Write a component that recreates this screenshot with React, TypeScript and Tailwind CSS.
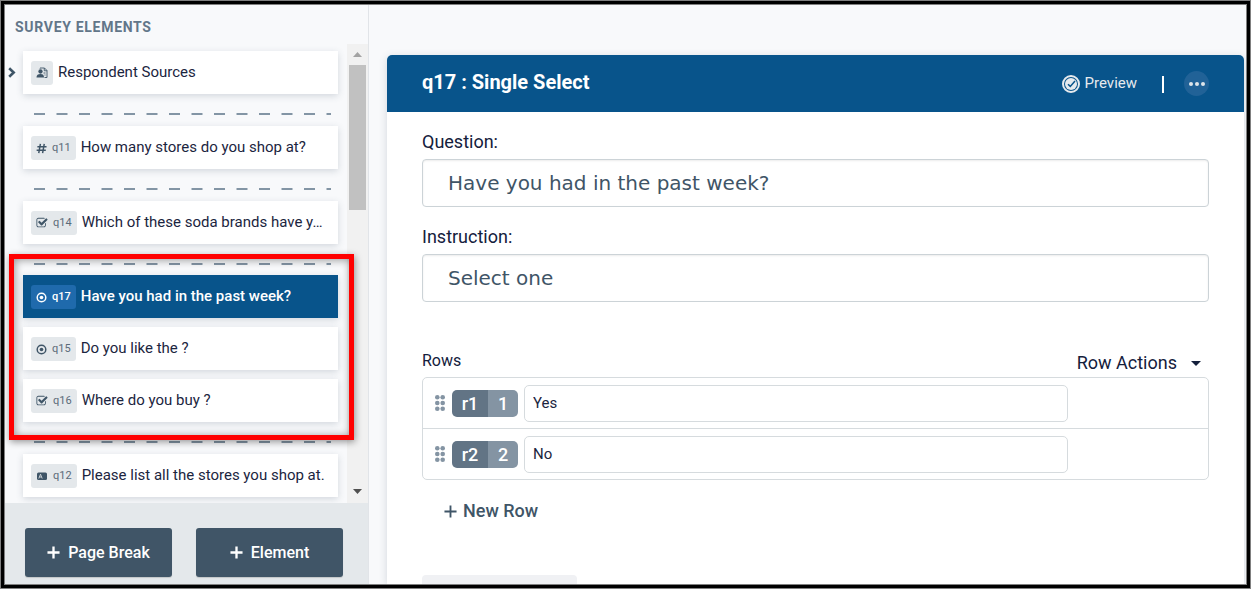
import type { ReactNode } from "react";

type Kind = "source" | "number" | "check" | "radio" | "text";

function KindIcon({ kind }: { kind: Kind }) {
  switch (kind) {
    case "source":
      return (
        <svg viewBox="0 0 24 24" className="size-3" fill="none" stroke="currentColor" strokeWidth="1.800" aria-hidden="true">
          <path d="M8 3V2h9l5 5v14h-5" />
          <path d="M16.500 2v5.500H22" />
          <circle cx="9" cy="9" r="4.300" fill="currentColor" stroke="none" />
          <path d="M1 21c0-5 3-7 8-7s7 2 7 7z" fill="currentColor" stroke="none" />
          <path d="M15 12h4M17 16h2" />
        </svg>
      );
    case "number":
      return (
        <svg viewBox="0 0 12 12" className="size-[11px]" fill="none" stroke="currentColor" strokeWidth="1.600" aria-hidden="true">
          <path d="M4.800 1 3 11M9 1 7.200 11M1.500 4.200h10M.700 7.900h10" />
        </svg>
      );
    case "check":
      return (
        <svg viewBox="0 0 1792 1792" className="size-3" fill="currentColor" aria-hidden="true">
          <path d="M1472 930v318q0 119-84.5 203.5t-203.5 84.500h-832q-119 0-203.500-84.500t-84.500-203.500v-832q0-119 84.500-203.500t203.500-84.500h832q63 0 117 25 15 7 18 23 3 17-9 29l-49 49q-10 10-23 10-3 0-9-2-23-6-45-6h-832q-66 0-113 47t-47 113v832q0 66 47 113t113 47h832q66 0 113-47t47-113v-254q0-13 9-22l64-64q10-10 23-10 6 0 12 3 20 8 20 29zm231-489l-814 814q-24 24-57 24t-57-24l-430-430q-24-24-24-57t24-57l110-110q24-24 57-24t57 24l263 263 647-647q24-24 57-24t57 24l110 110q24 24 24 57t-24 57z" />
        </svg>
      );
    case "radio":
      return (
        <svg viewBox="0 0 12 12" className="size-[11px]" aria-hidden="true">
          <circle cx="6" cy="6" r="4.700" fill="none" stroke="currentColor" strokeWidth="1.600" />
          <circle cx="6" cy="6" r="2" fill="currentColor" />
        </svg>
      );
    case "text":
      return (
        <svg viewBox="0 0 12 12" className="size-3" aria-hidden="true">
          <rect x="1" y="2.500" width="10" height="7.500" rx="1.500" fill="currentColor" />
          <path d="M2.800 8.500 4.500 4.200 6.200 8.500M3.500 7h2" stroke="#e4e8eb" strokeWidth=".8" fill="none" />
        </svg>
      );
  }
}

function ElementCard({ kind, id, title, active }: { kind: Kind; id?: string; title: string; active?: boolean }) {
  return (
    <button
      type="button"
      className={
        active
          ? "flex h-[43px] w-full items-center gap-[5px] bg-[#08548b] px-2 text-left font-medium text-white shadow-[0_2px_7px_rgba(60,80,100,0.2)]"
          : "flex h-[43px] w-full items-center gap-[5px] bg-white px-2 text-left text-[#1b2540] shadow-[0_2px_7px_rgba(60,80,100,0.2)]"
      }
    >
      <span
        className={
          active
            ? "mt-px flex h-6 shrink-0 items-center gap-[5px] rounded-[3px] bg-[#1f6aac] px-[5px] text-[11px] text-white"
            : "mt-px flex h-6 shrink-0 items-center gap-[5px] rounded-[3px] bg-[#e4e8eb] px-[5px] text-[11px] text-[#5b6b79]"
        }
      >
        <span className={active ? "text-white" : "text-[#3f5567]"}>
          <KindIcon kind={kind} />
        </span>
        {id}
      </span>
      <span className="mb-0.5 text-[15px] leading-5 whitespace-nowrap">{title}</span>
    </button>
  );
}

function PageBreakLine() {
  return (
    <svg viewBox="0 0 594 4" preserveAspectRatio="none" className="mt-[19px] mb-[11px] ml-[11px] block h-0.5 w-[297px]" aria-hidden="true">
      <path d="M0 2H594" stroke="#8395a5" strokeWidth="4" strokeDasharray="22 23" />
    </svg>
  );
}

function Plus({ className }: { className: string }) {
  return (
    <svg viewBox="0 0 14 14" className={className} fill="none" stroke="currentColor" aria-hidden="true">
      <path d="M7 .5v13M.5 7h13" />
    </svg>
  );
}

function SideButton({ children }: { children: ReactNode }) {
  return (
    <button
      type="button"
      className="flex h-[49px] flex-1 items-center justify-center gap-2 rounded-[3px] bg-[#405567] font-medium text-white shadow-[0_1px_1px_rgba(0,0,0,0.15)]"
    >
      <Plus className="size-[13px] stroke-[2.500]" />
      {children}
    </button>
  );
}

function Sidebar() {
  return (
    <aside className="flex w-[364px] shrink-0 flex-col border-r border-[#e1e4e8] bg-[#f8f9fb]">
      <h2 className="flex h-[39px] shrink-0 items-center pt-1.5 pl-2.5 text-[14px] font-bold tracking-wider text-[#627689]">
        SURVEY ELEMENTS
      </h2>
      <div className="flex min-h-0 flex-1">
        <div className="flex w-[18px] shrink-0 pt-[23px] pl-[3px] text-[#3f5567]">
          <svg viewBox="0 0 8 11" className="h-[11px] w-2" fill="none" stroke="currentColor" strokeWidth="2.600" aria-hidden="true">
            <path d="M1.200 1.200 5.700 5.500 1.200 9.800" />
          </svg>
        </div>
        <nav aria-label="Survey elements" className="min-w-0 flex-1 pt-[7px]">
          <ElementCard kind="source" title="Respondent Sources" />
          <PageBreakLine />
          <ElementCard kind="number" id="q11" title="How many stores do you shop at?" />
          <PageBreakLine />
          <ElementCard kind="check" id="q14" title="Which of these soda brands have y…" />
          <PageBreakLine />
          <div className="relative -mt-px flex flex-col gap-[9px]">
            <ElementCard kind="radio" id="q17" title="Have you had in the past week?" active />
            <ElementCard kind="radio" id="q15" title="Do you like the ?" />
            <ElementCard kind="check" id="q16" title="Where do you buy ?" />
            <div className="pointer-events-none absolute -top-[21px] -right-4 -bottom-[18px] -left-3.5 z-10 border-5 border-[#ff0000] shadow-[1px_2px_7px_rgba(0,0,0,0.4),inset_1px_1px_9px_rgba(0,0,0,0.4)]" />
          </div>
          <PageBreakLine />
          <ElementCard kind="text" id="q12" title="Please list all the stores you shop at." />
        </nav>
        <div className="ml-[9px] flex w-[21px] shrink-0 flex-col items-center justify-between bg-[#f1f1f1]">
          <div className="flex flex-col items-center">
            <svg viewBox="0 0 9 5" className="my-2 h-[5px] w-[9px]" aria-hidden="true">
              <path d="M4.500 0 9 5H0z" fill="#a3a3a3" />
            </svg>
            <div className="h-[145px] w-[17px] bg-[#c1c1c1]" />
          </div>
          <svg viewBox="0 0 9 5" className="mb-[9px] h-[5px] w-[9px]" aria-hidden="true">
            <path d="M0 0h9L4.500 5z" fill="#505050" />
          </svg>
        </div>
      </div>
      <div className="flex h-[81px] shrink-0 gap-6 bg-[#e4e8eb] pt-[25px] pr-[25px] pl-5">
        <SideButton>Page Break</SideButton>
        <SideButton>Element</SideButton>
      </div>
    </aside>
  );
}

function Field({ id, label, value }: { id: string; label: string; value: string }) {
  return (
    <div className="flex flex-col gap-1.5">
      <label htmlFor={id} className="text-[18px] leading-[22px] text-[#14203c]">
        {label}
      </label>
      <input
        id={id}
        defaultValue={value}
        className="h-12 w-full rounded-[4px] border border-[#ccd3d7] bg-white px-[25px] font-['DejaVu_Sans',sans-serif] text-[20px] text-[#3f5567] shadow-[inset_0_1px_2px_rgba(0,0,0,0.08)]"
      />
    </div>
  );
}

function AnswerRow({ code, value, text }: { code: string; value: string; text: string }) {
  return (
    <li className="box-content flex h-[50px] items-center">
      <svg viewBox="0 0 10 16" className="ml-3 h-4 w-2.5 fill-[#8494a3]" aria-hidden="true">
        {[2.3, 8, 13.7].map((y) => (
          <g key={y}>
            <circle cx="2.300" cy={y} r="2.300" />
            <circle cx="7.700" cy={y} r="2.300" />
          </g>
        ))}
      </svg>
      <div className="ml-[7px] flex h-[27px] w-[66px] overflow-hidden rounded-[5px] text-[18px] leading-[27px] font-medium text-white">
        <span className="w-9 bg-[#627485] text-center">{code}</span>
        <span className="flex-1 bg-[#8494a3] text-center">{value}</span>
      </div>
      <input
        aria-label={`Row ${code}`}
        defaultValue={text}
        className="mr-[140px] ml-1.5 h-[37px] min-w-0 flex-1 rounded-[5px] border border-[#d6dbde] bg-white px-2 text-[15px] text-[#1b2540]"
      />
    </li>
  );
}

function Editor() {
  return (
    <main className="flex min-w-0 flex-1 flex-col bg-[#f8f9fb] pt-[50px] pr-0.5 pl-[18px]">
      <section className="flex flex-1 flex-col rounded-t-[5px] bg-white shadow-[0_2px_8px_rgba(60,80,100,0.2)]">
        <header className="flex h-[57px] shrink-0 items-center rounded-t-[5px] bg-[#08548b] px-[35px] text-white">
          <h1 className="mb-1 flex-1 text-[20px] leading-6 font-bold">q17 : Single Select</h1>
          <button type="button" className="flex items-center gap-[5px] text-[15px] text-[#e6eaee]">
            <svg viewBox="0 0 18 18" className="size-[18px]" fill="none" stroke="currentColor" aria-hidden="true">
              <circle cx="9" cy="9" r="8" strokeWidth="2" />
              <circle cx="9" cy="9" r="6" fill="currentColor" stroke="none" />
              <path d="M6 9.200 8.300 11.400 13 6" stroke="#08548b" strokeWidth="1.500" />
            </svg>
            Preview
          </button>
          <span className="mt-0.5 mr-5 ml-[25px] h-[17px] w-0.5 bg-white" />
          <button type="button" aria-label="More options" className="flex size-[25px] items-center justify-center rounded-full bg-[#216297]">
            <svg viewBox="0 0 16 4" className="h-1 w-4 fill-[#dfe5ea]" aria-hidden="true">
              <circle cx="2" cy="2" r="2" />
              <circle cx="8" cy="2" r="2" />
              <circle cx="14" cy="2" r="2" />
            </svg>
          </button>
        </header>
        <div className="px-[35px] pt-[19px]">
          <div className="flex flex-col gap-[19px]">
            <Field id="question" label="Question:" value="Have you had in the past week?" />
            <Field id="instruction" label="Instruction:" value="Select one" />
          </div>
          <div className="mt-[49px] flex items-center justify-between">
            <h2 className="mb-1 text-[16px] leading-5 text-[#14203c]">Rows</h2>
            <button type="button" className="mr-2 flex items-center gap-3.5 text-[18px] leading-6 text-[#14203c]">
              Row Actions
              <svg viewBox="0 0 10 5" className="h-[5px] w-2.5" aria-hidden="true">
                <path d="M0 0h10L5 5z" fill="currentColor" />
              </svg>
            </button>
          </div>
          <ul className="mt-0.5 divide-y divide-[#d6dbde] rounded-[5px] border border-[#d6dbde]">
            <AnswerRow code="r1" value="1" text="Yes" />
            <AnswerRow code="r2" value="2" text="No" />
          </ul>
          <button type="button" className="mt-[19px] ml-[22px] flex items-center gap-1.5 text-[18px] leading-6 font-medium text-[#3f5567]">
            <Plus className="size-[13px] stroke-[2]" />
            New Row
          </button>
        </div>
        <div className="mt-auto ml-[35px] h-[9px] w-[155px] rounded-t-[4px] bg-[#f0f1f4]" />
      </section>
    </main>
  );
}

export default function App() {
  return (
    <div className="h-screen border border-[#808080] bg-[#808080] font-[Roboto,sans-serif]">
      <div className="h-full border-3 border-black">
        <div className="flex h-full overflow-hidden border border-[#808080]">
          <Sidebar />
          <Editor />
        </div>
      </div>
    </div>
  );
}
